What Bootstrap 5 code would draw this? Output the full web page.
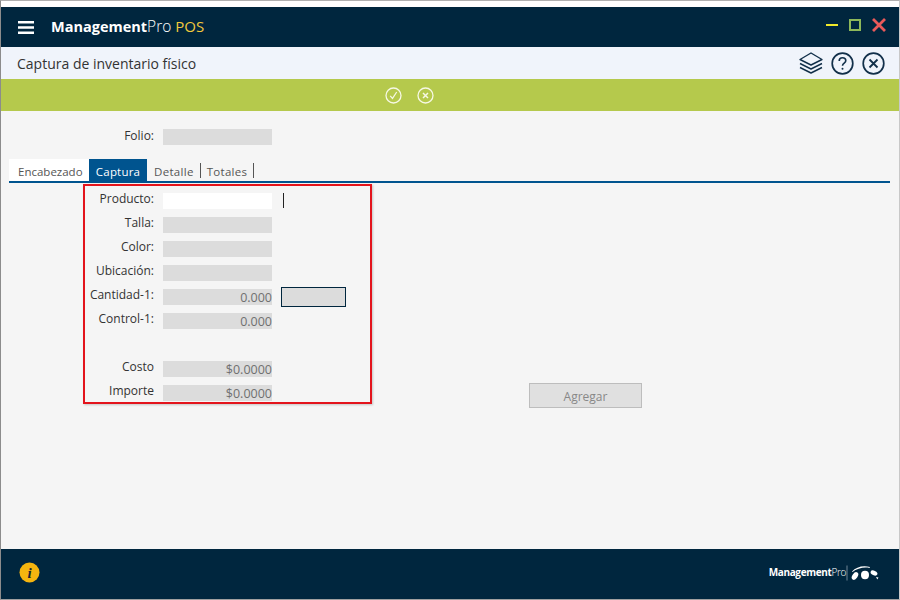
<!DOCTYPE html>
<html lang="es">
<head>
<meta charset="utf-8">
<title>Captura de inventario físico</title>
<link rel="stylesheet" href="https://cdn.jsdelivr.net/npm/bootstrap@5.3.0/dist/css/bootstrap.min.css">
<style>
html,body{height:100%;}
body{background:#fff;font-family:"Open Sans","Noto Sans",sans-serif;font-size:12px;color:#333;overflow:hidden;}
.shell{width:900px;height:600px;border-left:1px solid #8c8c8c;border-right:1px solid #c8c8c8;border-bottom:1px solid #a0a0a0;border-top:1px solid #b0b0b0;padding-top:6px;}
.topbar{height:40px;background:#00263e;color:#fff;padding-left:17px;padding-right:13px;}
.brand{font-family:"Open Sans",sans-serif;font-size:15.5px;margin-left:17px;}
.brand b{font-weight:700;font-size:14.5px;}
.brand .thin{font-weight:300;}
.brand .pos{color:#f2c93c;font-weight:400;font-size:15px;}
.winbtns{gap:11px;margin-bottom:4px;}
.subbar{height:32px;background:#f0f4fb;padding:0 16px;font-size:14px;color:#333;}
.subbar .sicons{gap:8px;margin-right:-2px;}
.greenbar{height:32px;background:#b5c94c;gap:15px;padding-right:82px;}
.workspace{height:438px;background:#f5f5f5;padding:18px 9px 0 8px;}
.frow{height:24px;}
.flabel{width:154px;text-align:right;padding-right:9px;line-height:14px;color:#333;white-space:nowrap;}
.fbox{width:109px;height:16px;background:#dcdcdc;color:#707070;text-align:right;font-size:12.5px;line-height:18px;font-weight:500;}
.fbox.blank{background:#fff;}
.tabstrip{margin-top:6px;height:24px;border-bottom:2px solid #00548f;}
.tabitem{height:22px;line-height:25px;padding:0 6px;color:#555;font-size:11.5px;letter-spacing:.3px;background:#f5f5f5;white-space:nowrap;}
.tabitem.first{background:#fff;padding:0 0 0 9px;width:80px;letter-spacing:0;}
.tabitem.on{background:#00548f;color:#fff;width:58px;padding:0;text-align:center;letter-spacing:.2px;}
.tabitem.sep{border-right:1px solid #555;height:15px;line-height:17px;margin-top:4px;padding:0 6px 0 7px;}
.tabitem.sep:last-child{padding-left:6px;}
.formarea{position:relative;padding-top:1px;}
.redbox{width:289px;height:220px;border:2px solid #e3141c;margin-left:74px;box-shadow:1px 1px 2px rgba(0,0,0,.2);padding-top:7px;}
.redbox .flabel{width:78px;margin-top:-1px;}
.caret{width:1px;height:15px;background:#222;margin-left:11px;}
.darkbox{width:65px;height:20px;background:#dcdcdc;border:1px solid #00263e;margin-left:9px;margin-top:-2px;}
.addbtn{position:absolute;left:520px;top:200px;width:113px;height:25px;background:#e0e0e0;border:1px solid #bdbdbd;color:#888;font-size:12px;line-height:25px;border-radius:0;padding:0;}
.bottombar{height:50px;background:#00263e;padding:0 19px 3px 18px;}
.foot-brand{color:#fff;font-size:10px;letter-spacing:-.35px;}
.foot-brand b{font-weight:700;}
.foot-brand .thin{font-weight:300;}
</style>
</head>
<body>
<div class="shell d-flex flex-column">
  <div class="topbar d-flex align-items-center justify-content-between">
    <div class="d-flex align-items-center">
      <svg width="16" height="13" viewBox="0 0 16 13"><path d="M0 1.2h16M0 6.5h16M0 11.8h16" stroke="#fff" stroke-width="2.6"/></svg>
      <div class="brand"><b>Management</b><span class="thin">Pro</span> <span class="pos">POS</span></div>
    </div>
    <div class="winbtns d-flex align-items-center">
      <svg width="12" height="12" viewBox="0 0 12 12"><path d="M0 6h12" stroke="#f0e92a" stroke-width="2"/></svg>
      <svg width="12" height="12" viewBox="0 0 12 12"><rect x="1" y="1" width="10" height="10" fill="none" stroke="#8db85a" stroke-width="2"/></svg>
      <svg width="14" height="14" viewBox="0 0 14 14"><path d="M1 1l12 12M13 1L1 13" stroke="#ea5a5a" stroke-width="2.8"/></svg>
    </div>
  </div>
  <div class="subbar d-flex align-items-center justify-content-between">
    <div>Captura de inventario físico</div>
    <div class="sicons d-flex align-items-center">
      <svg width="24" height="24" viewBox="0 0 24 24" fill="none" stroke="#12304a" stroke-width="1.4" stroke-linejoin="round"><path d="M12 2L23 8.5 12 14 1 8.5z"/><path d="M1 12.5L12 18l11-5.5"/><path d="M1 16.5L12 22l11-5.5"/></svg>
      <svg width="23" height="23" viewBox="0 0 23 23" fill="none" stroke="#12304a"><circle cx="11.5" cy="11.5" r="10.3" stroke-width="1.7"/><path d="M8.2 9c0-2 1.4-3.2 3.3-3.2s3.3 1.2 3.3 2.9c0 2.4-3.3 2.4-3.3 5" stroke-width="1.6"/><circle cx="11.5" cy="16.8" r="1" fill="#12304a" stroke="none"/></svg>
      <svg width="23" height="23" viewBox="0 0 23 23" fill="none" stroke="#12304a"><circle cx="11.5" cy="11.5" r="10.3" stroke-width="1.7"/><path d="M7.5 7.5l8 8M15.5 7.5l-8 8" stroke-width="1.8"/></svg>
    </div>
  </div>
  <div class="greenbar d-flex align-items-center justify-content-center">
    <svg width="17" height="17" viewBox="0 0 17 17" fill="none" stroke="#f6f8e4"><circle cx="8.5" cy="8.5" r="7.5" stroke-width="1.3"/><path d="M5.2 8.8l2.3 2.6 4.2-6.4" stroke-width="1.2"/></svg>
    <svg width="17" height="17" viewBox="0 0 17 17" fill="none" stroke="#f6f8e4"><circle cx="8.5" cy="8.5" r="7.5" stroke-width="1.3"/><path d="M6 6l5 5M11 6l-5 5" stroke-width="1.5"/></svg>
  </div>
  <div class="workspace">
    <div class="frow d-flex align-items-start">
      <div class="flabel">Folio:</div><div class="fbox"></div>
    </div>
    <div class="tabstrip d-flex align-items-start">
      <div class="tabitem first">Encabezado</div>
      <div class="tabitem on">Captura</div>
      <div class="tabitem sep">Detalle</div>
      <div class="tabitem sep">Totales</div>
    </div>
    <div class="formarea">
      <div class="redbox">
        <div class="frow d-flex align-items-start"><div class="flabel">Producto:</div><div class="fbox blank"></div><div class="caret"></div></div>
        <div class="frow d-flex align-items-start"><div class="flabel">Talla:</div><div class="fbox"></div></div>
        <div class="frow d-flex align-items-start"><div class="flabel">Color:</div><div class="fbox"></div></div>
        <div class="frow d-flex align-items-start"><div class="flabel">Ubicación:</div><div class="fbox"></div></div>
        <div class="frow d-flex align-items-start"><div class="flabel">Cantidad-1:</div><div class="fbox">0.000</div><div class="darkbox"></div></div>
        <div class="frow d-flex align-items-start"><div class="flabel">Control-1:</div><div class="fbox">0.000</div></div>
        <div class="frow"></div>
        <div class="frow d-flex align-items-start"><div class="flabel">Costo</div><div class="fbox">$0.0000</div></div>
        <div class="frow d-flex align-items-start"><div class="flabel">Importe</div><div class="fbox">$0.0000</div></div>
      </div>
      <button class="btn addbtn" type="button">Agregar</button>
    </div>
  </div>
  <div class="bottombar d-flex align-items-center justify-content-between">
    <svg width="21" height="21" viewBox="0 0 21 21"><circle cx="10.5" cy="10.5" r="10" fill="#f5b50f"/><text x="10.5" y="16" text-anchor="middle" font-family="Liberation Serif,serif" font-weight="700" font-style="italic" font-size="15" fill="#1b2230">i</text></svg>
    <div class="d-flex align-items-center">
      <div class="foot-brand"><b>Management</b><span class="thin">Pro</span></div>
      <svg width="34" height="16" viewBox="0 0 34 16"><path d="M1 .5v15" stroke="#9fb0bb" stroke-width=".7"/><g fill="#fff"><ellipse cx="9" cy="11" rx="2.6" ry="4.2" transform="rotate(35 9 11)"/><ellipse cx="19" cy="10" rx="4" ry="4.2"/><ellipse cx="28" cy="8" rx="3.6" ry="2.2" transform="rotate(25 28 8)"/><path d="M6 6.5C10 2 17 0 24 2l-.5 1C18 1.8 11 3.5 6.5 7zM30 12l2.5.6-1.2 1.8z"/></g></svg>
    </div>
  </div>
</div>
<script src="https://cdn.jsdelivr.net/npm/bootstrap@5.3.0/dist/js/bootstrap.bundle.min.js"></script>
</body>
</html>
